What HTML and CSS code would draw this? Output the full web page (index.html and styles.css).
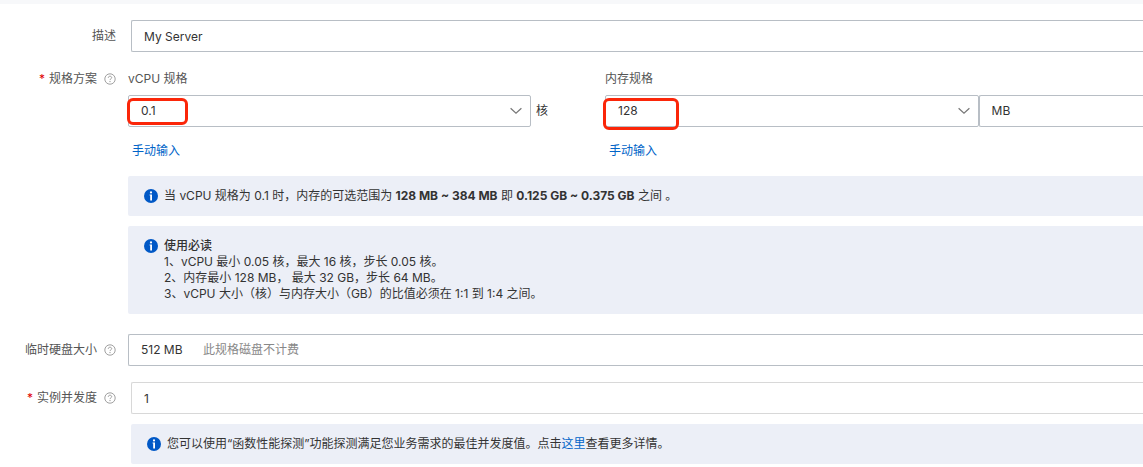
FILE: index.html
```html
<!DOCTYPE html>
<html lang="zh-CN">
<head>
<meta charset="utf-8">
<title>函数规格</title>
<link rel="stylesheet" href="styles.css">
</head>
<body>
<svg class="sprite" aria-hidden="true">
  <symbol id="help" viewBox="0 0 12 12">
    <circle cx="6" cy="6" r="5.2" fill="none" stroke="currentColor" stroke-width=".8"/>
    <path d="M4.3 4.9C4.3 3.8 5 3.2 6 3.2s1.7.6 1.7 1.5C7.7 5.7 6 5.8 6 7.1" fill="none" stroke="currentColor" stroke-width=".8"/>
    <circle cx="6" cy="8.6" r=".6" fill="currentColor"/>
  </symbol>
  <symbol id="info" viewBox="0 0 14 14">
    <circle cx="7" cy="7" r="7" fill="#0058c6"/>
    <circle cx="7" cy="3.4" r="1.1" fill="#fff"/>
    <path d="M5.6 5.5H8V11.4H6.2V6.5H5.6Z" fill="#fff"/>
  </symbol>
  <symbol id="chevron" viewBox="0 0 12 8">
    <path d="M.6 1.2 6 6.2 11.4 1.2" fill="none" stroke="currentColor" stroke-width="1.2"/>
  </symbol>
</svg>
<form class="form">
  <div class="row">
    <label class="label" for="desc">描述</label>
    <div class="content content-inset">
      <input class="control" id="desc" type="text" value="My Server">
    </div>
  </div>

  <div class="row">
    <div class="label label-short"><span class="star">*</span>规格方案<svg class="help"><use href="#help"/></svg></div>
    <div class="content">
      <div class="specs">
        <div class="spec">
          <label class="spec-title" for="cpu">vCPU 规格</label>
          <div class="cpu-line">
            <div class="select-wrap">
              <select class="control" id="cpu"><option>0.1</option></select>
              <svg class="chevron"><use href="#chevron"/></svg>
              <span class="mark mark-cpu"></span>
            </div>
            <span>核</span>
          </div>
          <a class="manual" href="#">手动输入</a>
        </div>
        <div class="spec">
          <label class="spec-title" for="memory">内存规格</label>
          <div class="memory-line">
            <div class="select-wrap">
              <select class="control" id="memory"><option>128</option></select>
              <svg class="chevron"><use href="#chevron"/></svg>
              <span class="mark mark-memory"></span>
            </div>
            <select class="control unit" aria-label="内存单位"><option>MB</option></select>
          </div>
          <a class="manual" href="#">手动输入</a>
        </div>
      </div>
      <div class="notice">
        <svg class="info"><use href="#info"/></svg>
        <p>当 vCPU 规格为 0.1 时，内存的可选范围为 <b>128 MB ~ 384 MB</b> 即 <b>0.125 GB ~ 0.375 GB</b> 之间 。</p>
      </div>
      <div class="notice">
        <svg class="info"><use href="#info"/></svg>
        <div>
          <p class="notice-title">使用必读</p>
          <p>1、vCPU 最小 0.05 核，最大 16 核，步长 0.05 核。</p>
          <p>2、内存最小 128 MB， 最大 32 GB，步长 64 MB。</p>
          <p>3、vCPU 大小（核）与内存大小（GB）的比值必须在 1:1 到 1:4 之间。</p>
        </div>
      </div>
    </div>
  </div>

  <div class="row">
    <label class="label" for="disk">临时硬盘大小<svg class="help"><use href="#help"/></svg></label>
    <div class="content">
      <div class="control disk">
        <select class="plain" id="disk"><option>512 MB</option></select>
        <span class="hint">此规格磁盘不计费</span>
      </div>
    </div>
  </div>

  <div class="row">
    <label class="label" for="concurrency"><span class="star">*</span>实例并发度<svg class="help"><use href="#help"/></svg></label>
    <div class="content content-inset">
      <input class="control light" id="concurrency" type="text" value="1">
      <div class="notice">
        <svg class="info"><use href="#info"/></svg>
        <p>您可以使用“函数性能探测”功能探测满足您业务需求的最佳并发度值。点击<a href="#">这里</a>查看更多详情。</p>
      </div>
    </div>
  </div>
</form>
</body>
</html>
```
FILE: styles.css
```css
* {
  box-sizing: border-box;
}

body {
  margin: 0;
  border-top: 4px solid #f7f8fa;
  background: #fff;
  color: #333;
  font: 12px/16px Inter, "Noto Sans CJK SC", sans-serif;
  overflow-x: hidden;
}

p {
  margin: 0;
}

a {
  color: #0064c8;
  text-decoration: none;
}

.sprite {
  position: absolute;
  width: 0;
  height: 0;
}

.form {
  display: flex;
  flex-direction: column;
  gap: 16px;
  padding-top: 16px;
}

.row {
  display: grid;
  grid-template-columns: 116px minmax(0, 1fr);
  column-gap: 12px;
}

.row:nth-child(3) {
  margin-top: 4px;
}

.label {
  display: flex;
  align-items: center;
  justify-content: flex-end;
  height: 32px;
  color: #555;
}

.label-short {
  height: 22px;
}

.star {
  margin-right: 4px;
  color: #e00000;
}

.help {
  width: 12px;
  height: 12px;
  margin-left: 7px;
  color: #888;
}

.content {
  display: flex;
  flex-direction: column;
  gap: 10px;
}

.content-inset {
  padding-left: 3px;
}

.control {
  appearance: none;
  display: block;
  width: 100%;
  height: 32px;
  padding: 0 12px;
  border: 1px solid #b8bec5;
  border-right-width: 0;
  border-radius: 2px 0 0 2px;
  background: #fff;
  color: #333;
  font: inherit;
}

.light {
  border-color: #d8d8d8;
}

.specs {
  display: grid;
  grid-template-columns: 47fr 53fr;
  margin-bottom: 6px;
}

.spec {
  display: flex;
  flex-direction: column;
  align-items: stretch;
}

.spec-title {
  padding: 3px 0 8px;
  color: #555;
}

.cpu-line {
  display: flex;
  align-items: center;
  gap: 5px;
  padding-right: 57px;
}

.cpu-line .select-wrap {
  flex: 1;
}

.memory-line {
  display: grid;
  grid-template-columns: 25fr 11fr;
}

.select-wrap {
  position: relative;
}

.select-wrap .control {
  border-right-width: 1px;
  border-radius: 2px;
}

.chevron {
  position: absolute;
  top: 12px;
  right: 9px;
  width: 12px;
  height: 8px;
  color: #777;
  pointer-events: none;
}

.mark {
  position: absolute;
  border: 3px solid #fb2609;
  border-radius: 6px;
  pointer-events: none;
}

.mark-cpu {
  top: 3px;
  left: -1px;
  width: 61px;
  height: 27px;
}

.mark-memory {
  top: 3px;
  left: -2px;
  width: 76px;
  height: 32px;
}

.manual {
  align-self: flex-start;
  margin: 16px 0 1px 4px;
}

.notice {
  display: flex;
  gap: 6px;
  padding: 12px 16px;
  border-radius: 2px 0 0 2px;
  background: #eceff7;
}

.notice-title {
  font-weight: 500;
}

.info {
  flex: none;
  width: 14px;
  height: 14px;
  margin-top: 1px;
}

.disk {
  display: flex;
  align-items: center;
  gap: 20px;
}

.plain {
  appearance: none;
  padding: 0;
  border: 0;
  background: none;
  color: inherit;
  font: inherit;
}

.hint {
  color: #888;
}
```
